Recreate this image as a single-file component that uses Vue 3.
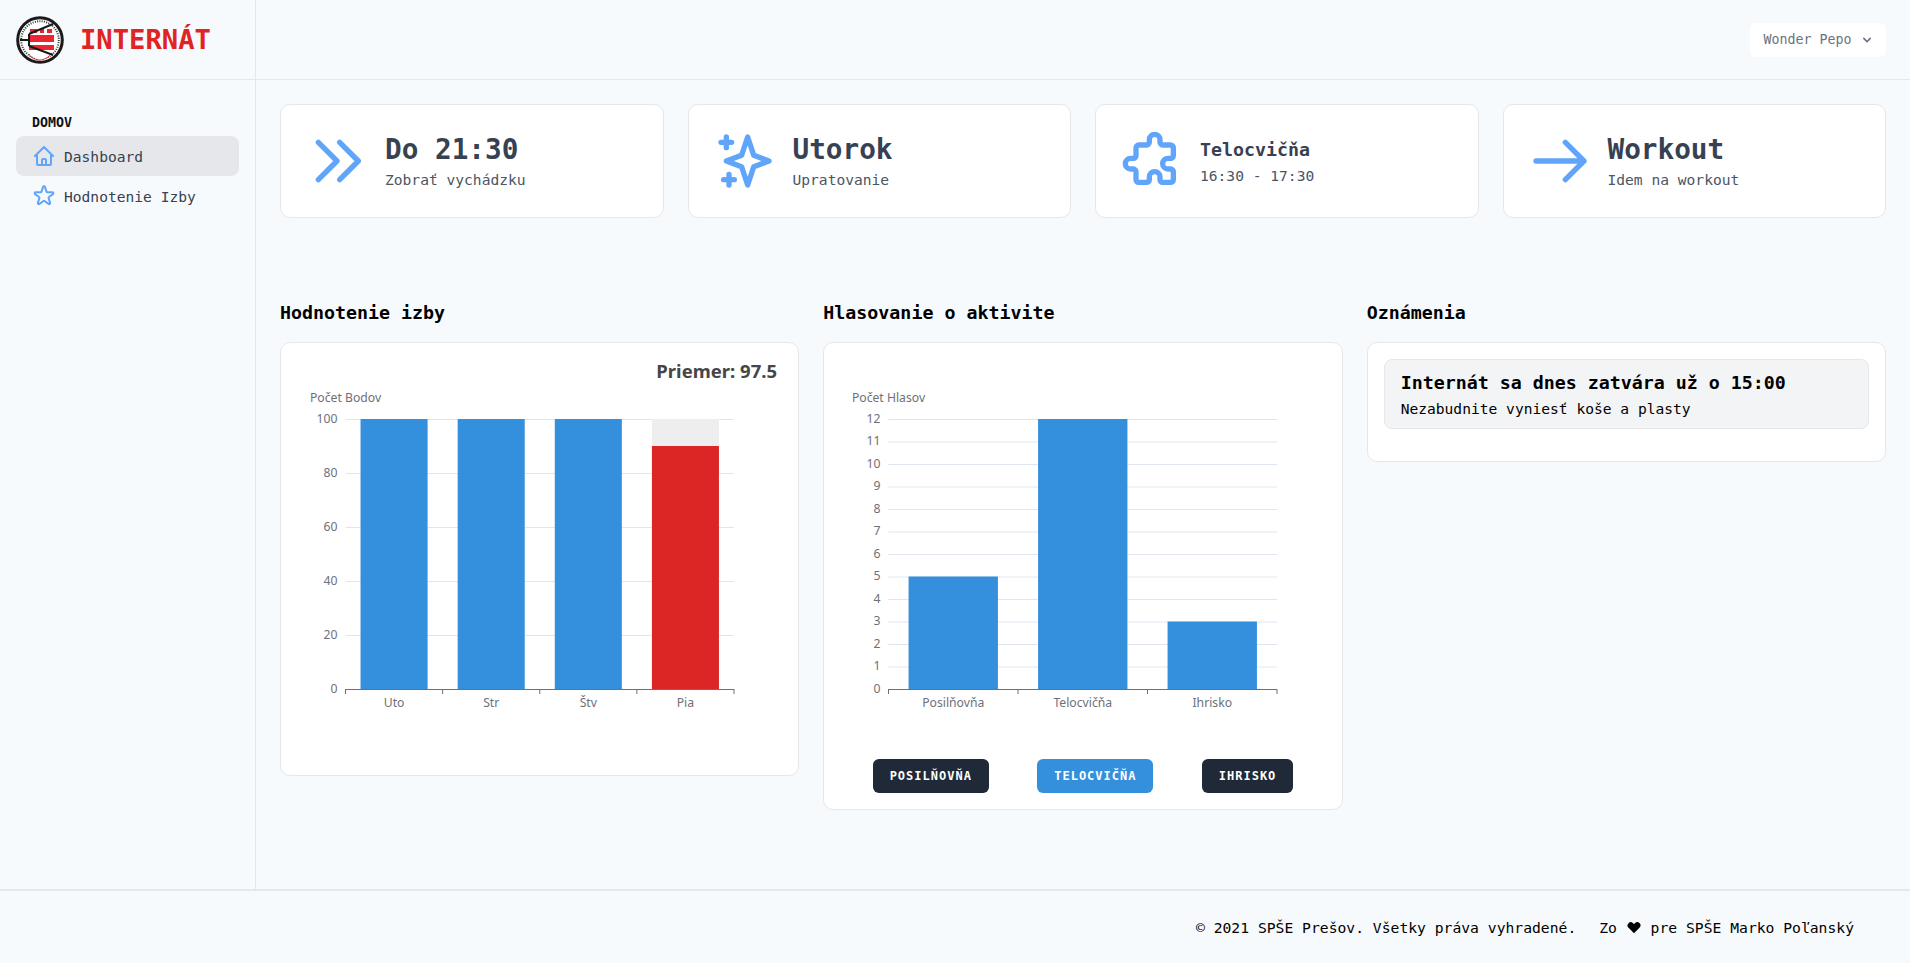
<script setup>
import { computed } from "vue";

// ploty su robene rucne cez svg, suradnice su vztiahnute na vnutro karty
const axisTop = 76;
const axisBottom = 346;

function buildChart(cfg) {
  const span = axisBottom - axisTop;
  const catWidth = (cfg.right - cfg.left) / cfg.bars.length;
  const yOf = (v) => axisBottom - (v / cfg.max) * span;
  const ticks = [];
  for (let v = 0; v <= cfg.max; v += cfg.step) ticks.push({ v, y: yOf(v) });
  const bars = cfg.bars.map((b, i) => {
    const w = catWidth * 0.69;
    return {
      ...b,
      x: cfg.left + catWidth * i + (catWidth - w) / 2,
      w,
      y: yOf(b.value),
      h: axisBottom - yOf(b.value),
      cx: cfg.left + catWidth * i + catWidth / 2,
    };
  });
  const edges = cfg.bars.map((_, i) => cfg.left + catWidth * i);
  edges.push(cfg.right);
  return { ...cfg, ticks, bars, edges };
}

const roomChart = computed(() =>
  buildChart({
    name: "Počet Bodov",
    left: 64.5,
    right: 453,
    max: 100,
    step: 20,
    height: 432,
    background: true,
    bars: [
      { label: "Uto", value: 100, color: "#3490dc" },
      { label: "Str", value: 100, color: "#3490dc" },
      { label: "Štv", value: 100, color: "#3490dc" },
      { label: "Pia", value: 90, color: "#dc2626" },
    ],
  })
);

const voteChart = computed(() =>
  buildChart({
    name: "Počet Hlasov",
    left: 64.5,
    right: 453,
    max: 12,
    step: 1,
    height: 416,
    background: false,
    bars: [
      { label: "Posilňovňa", value: 5, color: "#3490dc" },
      { label: "Telocvičňa", value: 12, color: "#3490dc" },
      { label: "Ihrisko", value: 3, color: "#3490dc" },
    ],
  })
);

const charts = computed(() => [roomChart.value, voteChart.value]);

const icons = {
  chevrons: "M13 5l7 7-7 7M5 5l7 7-7 7",
  sparkles:
    "M5 3v4M3 5h4M6 17v4m-2-2h4m5-16l2.286 6.857L21 12l-5.714 2.143L13 21l-2.286-6.857L5 12l5.714-2.143L13 3z",
  puzzle:
    "M11 4a2 2 0 114 0v1a1 1 0 001 1h3a1 1 0 011 1v3a1 1 0 01-1 1h-1a2 2 0 100 4h1a1 1 0 011 1v3a1 1 0 01-1 1h-3a1 1 0 01-1-1v-1a2 2 0 10-4 0v1a1 1 0 01-1 1H7a1 1 0 01-1-1v-3a1 1 0 00-1-1H4a2 2 0 110-4h1a1 1 0 001-1V7a1 1 0 011-1h3a1 1 0 001-1V4z",
  arrow: "M14 5l7 7m0 0l-7 7m7-7H3",
  home: "M3 12l2-2m0 0l7-7 7 7M5 10v10a1 1 0 001 1h3m10-11l2 2m-2-2v10a1 1 0 01-1 1h-3m-6 0a1 1 0 001-1v-4a1 1 0 011-1h2a1 1 0 011 1v4a1 1 0 001 1m-6 0h6",
  star: "M11.049 2.927c.3-.921 1.603-.921 1.902 0l1.519 4.674a1 1 0 00.95.69h4.915c.969 0 1.371 1.24.588 1.81l-3.976 2.888a1 1 0 00-.363 1.118l1.518 4.674c.3.922-.755 1.688-1.538 1.118l-3.976-2.888a1 1 0 00-1.176 0l-3.976 2.888c-.783.57-1.838-.197-1.538-1.118l1.518-4.674a1 1 0 00-.363-1.118l-3.976-2.888c-.784-.57-.38-1.81.588-1.81h4.914a1 1 0 00.951-.69l1.519-4.674z",
};

const infoCards = [
  { icon: icons.chevrons, title: "Do 21:30", sub: "Zobrať vychádzku" },
  { icon: icons.sparkles, title: "Utorok", sub: "Upratovanie" },
  { icon: icons.puzzle, title: "Telocvičňa", sub: "16:30 - 17:30", small: true },
  { icon: icons.arrow, title: "Workout", sub: "Idem na workout" },
];

const navItems = [
  { icon: icons.home, label: "Dashboard", active: true },
  { icon: icons.star, label: "Hodnotenie Izby", active: false },
];

const voteButtons = [
  { label: "Posilňovňa", active: false },
  { label: "Telocvičňa", active: true },
  { label: "Ihrisko", active: false },
];
</script>

<template>
  <div class="shell">
    <div class="body-row">
      <aside class="sidebar">
        <div class="brand">
          <svg class="logo" viewBox="0 0 48 48" width="48" height="48">
            <circle cx="24" cy="24" r="22.3" fill="#fff" stroke="#1a1a1a" stroke-width="3" />
            <circle cx="24" cy="24" r="18.8" fill="none" stroke="#333" stroke-width="2" stroke-dasharray="1 1.3" />
            <path d="M13 12h23v27l-11 6-12-6z" fill="#fff" />
            <path d="M13 38c2 4 7 6 11 6s9-3 12-7" fill="none" stroke="#e4252d" stroke-width="1" />
            <path d="M14 13h7v4h-7zM24 13h4v4h-4zM31 13h5v4h-5z" fill="#e4252d" />
            <rect x="13" y="19" width="25" height="7" fill="#ec2530" />
            <rect x="13" y="29" width="25" height="5" fill="#ec2530" />
            <path d="M4 24h9M13 18v12M13 18L37 8M13 30l24 9" fill="none" stroke="#1a1a1a" stroke-width="2" />
          </svg>
          <span class="brand-name">INTERNÁT</span>
        </div>
        <div class="nav">
          <p class="nav-head">DOMOV</p>
          <a v-for="item in navItems" :key="item.label" class="nav-item" :class="{ active: item.active }">
            <svg class="nav-icon" viewBox="0 0 24 24" fill="none" stroke="#60a5fa" stroke-width="2" stroke-linecap="round" stroke-linejoin="round">
              <path :d="item.icon" />
            </svg>
            <span>{{ item.label }}</span>
          </a>
        </div>
      </aside>

      <div class="content">
        <header class="topbar">
          <button class="user-btn">
            <span>Wonder Pepo</span>
            <svg viewBox="0 0 20 20" width="16" height="16" fill="#6b7280">
              <path d="M5.293 7.293a1 1 0 011.414 0L10 10.586l3.293-3.293a1 1 0 111.414 1.414l-4 4a1 1 0 01-1.414 0l-4-4a1 1 0 010-1.414z" />
            </svg>
          </button>
        </header>

        <main class="main">
          <section class="info-grid">
            <div v-for="card in infoCards" :key="card.title" class="info-card">
              <svg class="info-icon" viewBox="0 0 24 24" fill="none" stroke="#60a5fa" stroke-width="2" stroke-linecap="round" stroke-linejoin="round">
                <path :d="card.icon" />
              </svg>
              <div class="info-text" :class="{ small: card.small }">
                <h3 class="info-title">{{ card.title }}</h3>
                <p class="info-sub">{{ card.sub }}</p>
              </div>
            </div>
          </section>

          <section class="panels">
            <div class="panel-col">
              <h2 class="panel-title">Hodnotenie izby</h2>
              <div class="panel">
                <svg class="chart" :width="517" :height="charts[0].height">
                  <text x="496" y="35" text-anchor="end" class="chart-heading">Priemer: 97.5</text>
                  <text :x="charts[0].left" y="59" text-anchor="middle" class="chart-label">{{ charts[0].name }}</text>
                  <g v-for="t in charts[0].ticks" :key="t.v">
                    <line v-if="t.v > 0" :x1="charts[0].left" :x2="charts[0].right" :y1="t.y + 0.5" :y2="t.y + 0.5" stroke="#e0e6f1" />
                    <text :x="charts[0].left - 8" :y="t.y + 3.8" text-anchor="end" class="chart-label">{{ t.v }}</text>
                  </g>
                  <g v-for="b in charts[0].bars" :key="b.label">
                    <rect :x="b.x" :y="axisTop" :width="b.w" :height="axisBottom - axisTop" fill="#eeeeee" />
                    <rect :x="b.x" :y="b.y" :width="b.w" :height="b.h" :fill="b.color" />
                    <text :x="b.cx" :y="axisBottom + 18" text-anchor="middle" class="chart-label">{{ b.label }}</text>
                  </g>
                  <line :x1="charts[0].left" :x2="charts[0].right" :y1="axisBottom + 0.5" :y2="axisBottom + 0.5" stroke="#6e7079" />
                  <line v-for="x in charts[0].edges" :key="x" :x1="x" :x2="x" :y1="axisBottom" :y2="axisBottom + 5" stroke="#6e7079" />
                </svg>
              </div>
            </div>

            <div class="panel-col">
              <h2 class="panel-title">Hlasovanie o aktivite</h2>
              <div class="panel vote-panel">
                <svg class="chart" :width="517" :height="charts[1].height">
                  <text :x="charts[1].left" y="59" text-anchor="middle" class="chart-label">{{ charts[1].name }}</text>
                  <g v-for="t in charts[1].ticks" :key="t.v">
                    <line v-if="t.v > 0" :x1="charts[1].left" :x2="charts[1].right" :y1="t.y + 0.5" :y2="t.y + 0.5" stroke="#e0e6f1" />
                    <text :x="charts[1].left - 8" :y="t.y + 3.8" text-anchor="end" class="chart-label">{{ t.v }}</text>
                  </g>
                  <g v-for="b in charts[1].bars" :key="b.label">
                    <rect :x="b.x" :y="b.y" :width="b.w" :height="b.h" :fill="b.color" />
                    <text :x="b.cx" :y="axisBottom + 18" text-anchor="middle" class="chart-label">{{ b.label }}</text>
                  </g>
                  <line :x1="charts[1].left" :x2="charts[1].right" :y1="axisBottom + 0.5" :y2="axisBottom + 0.5" stroke="#6e7079" />
                  <line v-for="x in charts[1].edges" :key="x" :x1="x" :x2="x" :y1="axisBottom" :y2="axisBottom + 5" stroke="#6e7079" />
                </svg>
                <div class="vote-row">
                  <button v-for="b in voteButtons" :key="b.label" class="vote-btn" :class="{ active: b.active }">{{ b.label }}</button>
                </div>
              </div>
            </div>

            <div class="panel-col">
              <h2 class="panel-title">Oznámenia</h2>
              <div class="panel notice-panel">
                <div class="notice">
                  <h4 class="notice-title">Internát sa dnes zatvára už o 15:00</h4>
                  <p class="notice-body">Nezabudnite vyniesť koše a plasty</p>
                </div>
              </div>
            </div>
          </section>
        </main>
      </div>
    </div>

    <footer class="footer">
      <span class="copy">© 2021 SPŠE Prešov. Všetky práva vyhradené.</span>
      <span class="made">Zo
        <svg class="heart" viewBox="0 0 20 20" width="16" height="18" fill="#000">
          <path d="M3.172 5.172a4 4 0 015.656 0L10 6.343l1.172-1.171a4 4 0 115.656 5.656L10 17.657l-6.828-6.829a4 4 0 010-5.656z" />
        </svg>
        pre SPŠE Marko Poľanský</span>
    </footer>
  </div>
</template>

<style>
html,
body {
  margin: 0;
  background: #f7fafc;
}
</style>

<style scoped>
.shell {
  height: 963px;
  display: flex;
  flex-direction: column;
  background: #f7fafd;
  font-family: "DejaVu Sans Mono", "Liberation Mono", monospace;
  overflow: hidden;
}

.body-row {
  flex: 1;
  display: flex;
  min-height: 0;
}

.sidebar {
  width: 255px;
  flex: none;
  border-right: 1px solid #e2e8f0;
}

.brand {
  height: 79px;
  border-bottom: 1px solid #e2e8f0;
  display: flex;
  align-items: center;
  padding-left: 16px;
  gap: 16px;
}

.brand-name {
  font-size: 27.2px;
  font-weight: 700;
  color: #e02424;
}

.nav {
  padding: 33px 16px 0;
}

.nav-head {
  margin: 0 0 3px 16px;
  font-size: 13.3px;
  line-height: 20px;
  font-weight: 700;
  color: #111;
}

.nav-item {
  height: 40px;
  display: flex;
  align-items: center;
  padding: 0 16px;
  gap: 8px;
  border-radius: 8px;
  font-size: 14.6px;
  color: #374151;
}

.nav-item.active {
  background: #e5e7eb;
}

.nav-icon {
  width: 24px;
  height: 24px;
}

.content {
  flex: 1;
  display: flex;
  flex-direction: column;
  min-width: 0;
}

.topbar {
  height: 79px;
  border-bottom: 1px solid #e2e8f0;
  display: flex;
  align-items: center;
  justify-content: flex-end;
  padding-right: 24px;
}

.user-btn {
  height: 34px;
  width: 136px;
  border: none;
  border-radius: 6px;
  background: #fff;
  display: flex;
  align-items: center;
  justify-content: center;
  gap: 7px;
  font-family: inherit;
  font-size: 13.3px;
  color: #6b7280;
  padding: 0 0 0 2px;
}

.main {
  padding: 24px;
}

.info-grid {
  display: grid;
  grid-template-columns: repeat(4, 1fr);
  gap: 24px;
}

.info-card {
  display: flex;
  align-items: center;
  gap: 16px;
  padding: 24px;
  background: #fff;
  border: 1px solid #e5e7eb;
  border-radius: 10px;
}

.info-icon {
  width: 64px;
  height: 64px;
  flex: none;
}

.info-text {
  padding-bottom: 2px;
}

.info-title {
  margin: 0;
  font-size: 27.7px;
  line-height: 40px;
  font-weight: 700;
  color: #374151;
}

.info-sub {
  margin: 0;
  font-size: 14.6px;
  line-height: 20px;
  color: #4b5563;
}

.info-text.small {
  padding: 2px 0 0;
}

.info-text.small .info-title {
  font-size: 18.3px;
  line-height: 28px;
}

.info-text.small .info-sub {
  line-height: 24px;
}

.panels {
  display: grid;
  grid-template-columns: repeat(3, 1fr);
  gap: 24px;
  margin-top: 81px;
  align-items: start;
}

.panel-title {
  margin: 0 0 15px;
  font-size: 18.3px;
  line-height: 28px;
  font-weight: 700;
  color: #000;
}

.panel {
  background: #fff;
  border: 1px solid #e5e7eb;
  border-radius: 10px;
}

.vote-panel {
  padding-bottom: 16px;
}

.chart {
  display: block;
  font-family: "Noto Sans", "Open Sans", sans-serif;
}

.chart-label {
  font-size: 12.2px;
  fill: #6e7079;
}

.chart-heading {
  font-size: 18.5px;
  font-weight: 700;
  fill: #464646;
}

.vote-row {
  display: flex;
  justify-content: space-evenly;
}

.vote-btn {
  height: 34px;
  padding: 0 16px;
  border: 1px solid transparent;
  border-radius: 6px;
  background: #1f2937;
  color: #fff;
  font-family: inherit;
  font-size: 12px;
  font-weight: 700;
  letter-spacing: 1px;
  text-transform: uppercase;
}

.vote-btn.active {
  background: #3490dc;
}

.notice-panel {
  padding: 16px 16px 32px;
}

.notice {
  height: 70px;
  box-sizing: border-box;
  padding: 9px 16px;
  background: #f3f4f6;
  border: 1px solid #e5e7eb;
  border-radius: 8px;
}

.notice-title {
  margin: 0;
  font-size: 18.3px;
  line-height: 28px;
  font-weight: 700;
  color: #000;
}

.notice-body {
  margin: 2px 0 0;
  font-size: 14.6px;
  line-height: 20px;
  color: #000;
}

.footer {
  height: 72px;
  flex: none;
  border-top: 2px solid #e2e8f0;
  display: flex;
  align-items: center;
  justify-content: flex-end;
  gap: 23px;
  padding-right: 56px;
  font-size: 14.7px;
  color: #000;
  white-space: pre-wrap;
}

.heart {
  vertical-align: -3px;
}
</style>
